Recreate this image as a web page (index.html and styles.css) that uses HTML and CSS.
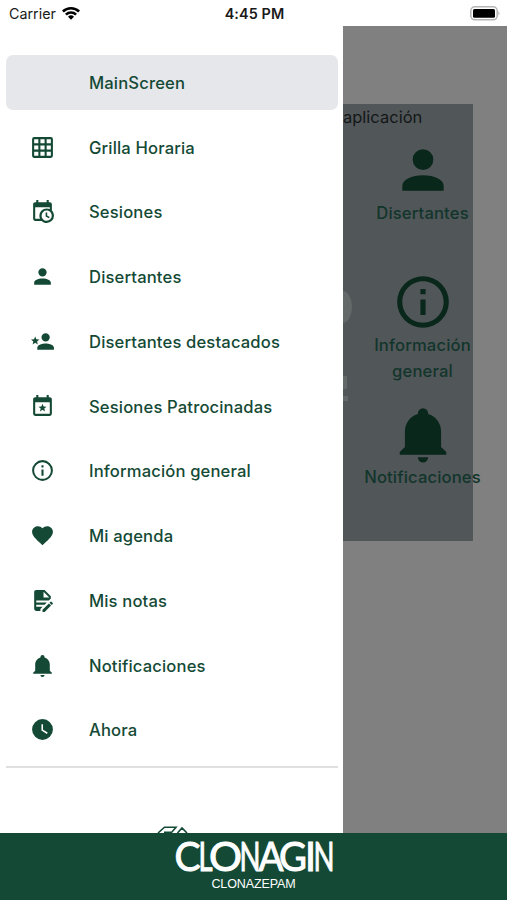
FILE: index.html
```html
<!DOCTYPE html>
<html lang="es">
<head>
<meta charset="utf-8">
<title>Clonagin</title>
<link rel="stylesheet" href="styles.css">
</head>
<body>
<div class="app">
  <header class="status">
    <div class="carrier"><span class="carrier-name">Carrier</span>
      <svg class="wifi" viewBox="0 0 18 14"><path d="M0 4.6A12.8 12.8 0 0 1 18 4.6L16.2 6.5A10.2 10.2 0 0 0 1.8 6.5ZM3 7.7A8.5 8.5 0 0 1 15 7.7L13.2 9.5A6 6 0 0 0 4.8 9.5ZM6 10.7A4.3 4.3 0 0 1 12 10.7L9 13.8Z"/></svg>
    </div>
    <div class="time">4:45 PM</div>
    <div class="power"><svg class="battery" viewBox="0 0 31 15"><rect x=".8" y=".8" width="26.4" height="13" rx="4" fill="#fff" stroke="#b5b5b5" stroke-width="1.5"/><rect x="3" y="3" width="22" height="8.7" rx="1.5"/><path d="M28.5 5Q30.5 7.3 28.5 9.6Z" fill="#aaa"/></svg></div>
  </header>
  <div class="body">
    <nav class="drawer">
      <ul class="menu">
        <li class="item active"><span class="icon"></span><span class="label">MainScreen</span></li>
        <li class="item"><svg class="icon" viewBox="0 0 24 24"><path d="M10,4V8H14V4H10M16,4V8H20V4H16M16,10V14H20V10H16M16,16V20H20V16H16M14,20V16H10V20H14M8,20V16H4V20H8M8,14V10H4V14H8M8,8V4H4V8H8M10,14H14V10H10V14M4,2H20A2,2 0 0,1 22,4V20A2,2 0 0,1 20,22H4C2.92,22 2,21.1 2,20V4A2,2 0 0,1 4,2Z"/></svg><span class="label">Grilla Horaria</span></li>
        <li class="item"><svg class="icon" viewBox="0 0 24 24"><path d="M15,13H16.5V15.82L18.94,17.23L18.19,18.53L15,16.69V13M19,8H5V19H9.67C9.24,18.09 9,17.07 9,16A7,7 0 0,1 16,9C17.07,9 18.09,9.24 19,9.67V8M5,21C3.89,21 3,20.1 3,19V5C3,3.89 3.89,3 5,3H6V1H8V3H16V1H18V3H19A2,2 0 0,1 21,5V11.1C22.24,12.36 23,14.09 23,16A7,7 0 0,1 16,23C14.09,23 12.36,22.24 11.1,21H5M16,11.15A4.85,4.85 0 0,0 11.15,16C11.15,18.68 13.32,20.85 16,20.85A4.85,4.85 0 0,0 20.85,16C20.85,13.32 18.68,11.15 16,11.15Z"/></svg><span class="label">Sesiones</span></li>
        <li class="item"><svg class="icon" viewBox="0 0 24 24"><path d="M12,4A4,4 0 0,1 16,8A4,4 0 0,1 12,12A4,4 0 0,1 8,8A4,4 0 0,1 12,4M12,14C16.42,14 20,15.79 20,18V20H4V18C4,15.79 7.58,14 12,14Z"/></svg><span class="label">Disertantes</span></li>
        <li class="item"><svg class="icon" viewBox="0 0 24 24"><path d="M15,14C12.3,14 7,15.3 7,18V20H23V18C23,15.3 17.7,14 15,14M15,12A4,4 0 0,0 19,8A4,4 0 0,0 15,4A4,4 0 0,0 11,8A4,4 0 0,0 15,12M5,13.28L7.45,14.77L6.8,11.96L9,10.08L6.11,9.83L5,7.19L3.87,9.83L1,10.08L3.18,11.96L2.5,14.77L5,13.28Z"/></svg><span class="label">Disertantes destacados</span></li>
        <li class="item"><svg class="icon" viewBox="0 0 24 24"><path d="M19,19H5V8H19M19,3H18V1H16V3H8V1H6V3H5C3.89,3 3,3.9 3,5V19A2,2 0 0,0 5,21H19A2,2 0 0,0 21,19V5C21,3.89 20.1,3 19,3M12,9.3L13.06,11.95L15.9,12.13L13.71,13.95L14.41,16.72L12,15.2L9.59,16.72L10.29,13.95L8.1,12.13L10.94,11.95Z"/></svg><span class="label">Sesiones Patrocinadas</span></li>
        <li class="item"><svg class="icon" viewBox="0 0 24 24"><path d="M11,9H13V7H11M12,20C7.59,20 4,16.41 4,12C4,7.59 7.59,4 12,4C16.41,4 20,7.59 20,12C20,16.41 16.41,20 12,20M12,2A10,10 0 0,0 2,12A10,10 0 0,0 12,22A10,10 0 0,0 22,12A10,10 0 0,0 12,2M11,17H13V11H11V17Z"/></svg><span class="label">Información general</span></li>
        <li class="item"><svg class="icon" viewBox="0 0 24 24"><path d="M12,21.35L10.55,20.03C5.4,15.36 2,12.27 2,8.5C2,5.41 4.42,3 7.5,3C9.24,3 10.91,3.81 12,5.08C13.09,3.81 14.76,3 16.5,3C19.58,3 22,5.41 22,8.5C22,12.27 18.6,15.36 13.45,20.03L12,21.35Z"/></svg><span class="label">Mi agenda</span></li>
        <li class="item"><svg class="icon" viewBox="0 0 24 24"><path d="M6,2C4.89,2 4,2.89 4,4V20A2,2 0 0,0 6,22H10V20.09L12.09,18H6V16H14.09L16.09,14H6V12H18.09L20,10.09V8L14,2H6M13,3.5L18.5,9H13V3.5M20.15,13C20,13 19.86,13.05 19.75,13.16L18.73,14.18L20.82,16.26L21.84,15.25C22.05,15.03 22.05,14.67 21.84,14.46L20.54,13.16C20.43,13.05 20.29,13 20.15,13M18.14,14.77L12,20.92V23H14.08L20.23,16.85L18.14,14.77Z"/></svg><span class="label">Mis notas</span></li>
        <li class="item"><svg class="icon" viewBox="0 0 24 24"><path d="M21,19V20H3V19L5,17V11C5,7.9 7.03,5.17 10,4.29C10,4.19 10,4.1 10,4A2,2 0 0,1 12,2A2,2 0 0,1 14,4C14,4.1 14,4.19 14,4.29C16.97,5.17 19,7.9 19,11V17L21,19M14,21A2,2 0 0,1 12,23A2,2 0 0,1 10,21"/></svg><span class="label">Notificaciones</span></li>
        <li class="item"><svg class="icon" viewBox="0 0 24 24"><path d="M12,2A10,10 0 0,0 2,12A10,10 0 0,0 12,22A10,10 0 0,0 22,12A10,10 0 0,0 12,2M16.2,16.2L11,13V7H12.5V12.2L17,14.9L16.2,16.2Z"/></svg><span class="label">Ahora</span></li>
      </ul>
      <svg class="emblem" viewBox="0 0 34 7"><path d="M1 7L7.500 1.200H19L14.500 6.400H7M20.500 7L25 2L30 7" fill="none" stroke="#144a35" stroke-width="1.600"/></svg>
    </nav>
    <main class="scene">
      <section class="card">
        <span class="disc"></span><span class="mark one"></span><span class="mark two"></span>
        <h1 class="heading">aplicación</h1>
        <div class="tile"><svg class="big" viewBox="0 0 24 24"><path d="M12,4A4,4 0 0,1 16,8A4,4 0 0,1 12,12A4,4 0 0,1 8,8A4,4 0 0,1 12,4M12,14C16.42,14 20,15.79 20,18V20H4V18C4,15.79 7.58,14 12,14Z"/></svg><span class="caption">Disertantes</span></div>
        <div class="tile"><svg class="big" viewBox="0 0 24 24"><path d="M11,9H13V7H11M12,20C7.59,20 4,16.41 4,12C4,7.59 7.59,4 12,4C16.41,4 20,7.59 20,12C20,16.41 16.41,20 12,20M12,2A10,10 0 0,0 2,12A10,10 0 0,0 12,22A10,10 0 0,0 22,12A10,10 0 0,0 12,2M11,17H13V11H11V17Z"/></svg><span class="caption">Información<br>general</span></div>
        <div class="tile"><svg class="big" viewBox="0 0 24 24"><path d="M21,19V20H3V19L5,17V11C5,7.9 7.03,5.17 10,4.29C10,4.19 10,4.1 10,4A2,2 0 0,1 12,2A2,2 0 0,1 14,4C14,4.1 14,4.19 14,4.29C16.97,5.17 19,7.9 19,11V17L21,19M14,21A2,2 0 0,1 12,23A2,2 0 0,1 10,21"/></svg><span class="caption">Notificaciones</span></div>
      </section>
    </main>
  </div>
  <footer class="brand">
    <svg class="logo" viewBox="0 0 164 50"><text class="logo-text" y="37.500"><tspan x="2.500" textLength="26" lengthAdjust="spacingAndGlyphs">C</tspan><tspan x="26.500" textLength="14" lengthAdjust="spacingAndGlyphs">L</tspan><tspan x="37" textLength="33" lengthAdjust="spacingAndGlyphs">O</tspan><tspan x="67.500" textLength="21" lengthAdjust="spacingAndGlyphs">N</tspan><tspan x="86.500" textLength="25" lengthAdjust="spacingAndGlyphs">A</tspan><tspan x="107" textLength="28" lengthAdjust="spacingAndGlyphs">G</tspan><tspan x="133" textLength="11" lengthAdjust="spacingAndGlyphs">I</tspan><tspan x="141.500" textLength="21" lengthAdjust="spacingAndGlyphs">N</tspan></text></svg>
    <span class="generic">CLONAZEPAM</span>
  </footer>
</div>
</body>
</html>
```

FILE: styles.css
```css
* { box-sizing: border-box; }
body { margin: 0; font-family: Inter, "Liberation Sans", sans-serif; background: #fff; }
.app { width: 507px; height: 900px; display: flex; flex-direction: column; overflow: hidden; }
.status { height: 26px; display: grid; grid-template-columns: 1fr auto 1fr; align-items: center; padding: 1px 6px 0 9px; color: #1a1a1a; font-size: 14.3px; }
.carrier { display: flex; align-items: center; gap: 6px; }
.wifi { width: 18px; height: 14px; margin-top: -1px; }
.time { font-weight: 600; font-size: 14.4px; letter-spacing: .1px; padding-right: 1px; }
.power { display: flex; justify-content: flex-end; }
.battery { width: 31px; height: 15px; margin-top: -1px; }
.body { flex: 1; min-height: 0; display: flex; }
.drawer { width: 343px; height: 807px; background: #fff; padding: 29px 5px 0 6px; overflow: hidden; display: flex; flex-direction: column; flex: none; }
.menu { list-style: none; margin: 0; padding: 0 0 9.3px; display: flex; flex-direction: column; gap: 10.25px; border-bottom: 2px solid #e0e0e0; }
.item { height: 54.5px; width: 332px; display: flex; align-items: center; gap: 34px; padding-left: 24px; border-radius: 7px; color: #144a35; }
.active { background: #e5e7eb; }
.icon { width: 25px; height: 25px; flex: none; fill: #144a35; }
.label { font-size: 16.6px; font-weight: 500; letter-spacing: .15px; white-space: nowrap; padding-top: 1px; }
.emblem { width: 34px; height: 7px; margin: 58px 0 0 151px; flex: none; }
.scene { flex: 1; background: #808080; padding-top: 78px; }
.card { width: 130px; height: 437px; background: #515659; position: relative; }
.heading { margin: 0; height: 35px; font-size: 16.5px; line-height: 26px; font-weight: 400; color: #141617; }
.tile { height: 132px; margin-left: 29px; width: 101px; display: flex; flex-direction: column; align-items: center; }
.big { width: 62px; height: 62px; fill: #0a271b; flex: none; }
.caption { font-size: 16.6px; line-height: 25.5px; font-weight: 500; letter-spacing: .15px; color: #12352b; text-align: center; white-space: nowrap; }
.disc { position: absolute; left: 0; top: 187px; width: 9px; height: 32px; border-radius: 0 9px 9px 0 / 0 16px 16px 0; background: #636869; }
.mark { position: absolute; left: 0; background: #636869; }
.one { top: 272px; width: 4px; height: 13px; }
.two { top: 292px; width: 5px; height: 5px; }
.brand { height: 67px; background: #144a35; display: flex; flex-direction: column; align-items: center; color: #fff; }
.logo { width: 164px; height: 50px; flex: none; overflow: visible; }
.logo-text { font-family: Lato, sans-serif; font-size: 40px; fill: #fff; stroke: #fff; stroke-width: 1px; }
.generic { font-family: "Liberation Sans", sans-serif; font-size: 12.5px; line-height: 16px; margin-top: -7px; letter-spacing: -.1px; }
```
